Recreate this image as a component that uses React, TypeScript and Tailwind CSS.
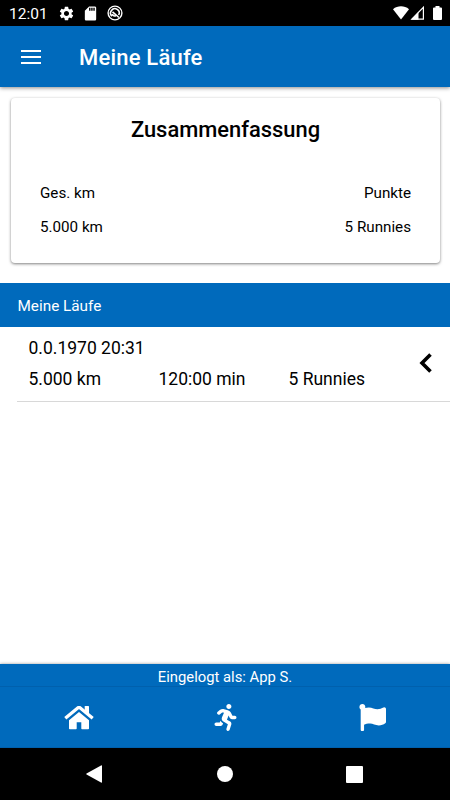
import { FaFlag, FaRunning } from 'react-icons/fa'
import { MdSdCard, MdSettings } from 'react-icons/md'

const runs = [
  { date: '0.0.1970 20:31', distance: '5.000 km', duration: '120:00 min', points: '5 Runnies' },
]

function StatusBar() {
  return (
    <div className="flex h-[26px] shrink-0 items-center bg-black pl-[9px] pr-[8px] text-white">
      <span className="w-[50px] pt-[2px] text-[15.5px] leading-[26px]">12:01</span>
      <MdSettings size={17} className="-ml-[1px]" />
      <MdSdCard size={17} className="ml-[7px]" />
      <svg className="ml-[8px]" width="16" height="16" viewBox="0 0 16 16" fill="none" stroke="currentColor">
        <circle cx="8" cy="8" r="6.9" strokeWidth="1.4" />
        <path d="M5 11.200A4.300 4.300 0 1 1 11.700 10M5.500 6.800L12 12.500M5.200 9.200c.8 1.500 2.300 2 3.600 1.600" strokeWidth="1.600" />
      </svg>
      <div className="ml-auto flex items-center">
        <svg width="16" height="14" viewBox="0 0 16 14" fill="currentColor">
          <path d="M0 3.200C4.600-.600 11.400-.600 16 3.200L8 13.500z" />
        </svg>
        <svg className="ml-[1px]" width="15" height="14" viewBox="0 0 15 14">
          <path d="M1.800 13.200H13.400V1.300z" fill="none" stroke="currentColor" strokeWidth="1.200" />
          <path d="M1 13.700L8.500 6v7.700z" fill="currentColor" />
        </svg>
        <svg className="ml-[8px]" width="9" height="14" viewBox="0 0 9 14" fill="currentColor">
          <path d="M2.500 0h4v1.400H8q1 0 1 1V13q0 1-1 1H1q-1 0-1-1V2.400q0-1 1-1h1.500z" />
        </svg>
      </div>
    </div>
  )
}

function Header() {
  return (
    <header className="relative z-10 flex h-[61px] shrink-0 items-center bg-[#006abc] pl-[21px] text-white shadow-[0_1px_4px_rgba(0,0,0,0.45)]">
      <button className="flex w-[58px] flex-col gap-[4px]" aria-label="Menü">
        <span className="h-[2px] w-[20px] bg-white" />
        <span className="h-[2px] w-[20px] bg-white" />
        <span className="h-[2px] w-[20px] bg-white" />
      </button>
      <h1 className="pt-[2px] text-[22px] font-medium tracking-[0.2px]">Meine Läufe</h1>
    </header>
  )
}

function Summary() {
  return (
    <section className="mr-[10px] ml-[11px] mt-[11px] h-[165px] shrink-0 rounded-[4px] bg-white px-[29px] pt-[15px] shadow-[0_1px_3px_rgba(0,0,0,0.5)]">
      <h2 className="text-center text-[21.9px] leading-[33px] font-medium">Zusammenfassung</h2>
      <div className="mt-[30px] flex justify-between text-[15.2px] leading-[34px]">
        <div>
          <p>Ges. km</p>
          <p>5.000 km</p>
        </div>
        <div className="text-right">
          <p>Punkte</p>
          <p>5 Runnies</p>
        </div>
      </div>
    </section>
  )
}

function RunList() {
  return (
    <section className="mt-[20px] grow">
      <h3 className="flex h-[44px] items-center bg-[#006abc] pl-[17.5px] text-[15.3px] text-white">
        <span className="pt-[3px]">Meine Läufe</span>
      </h3>
      {runs.map((run) => (
        <div key={run.date} className="ml-[17px] flex h-[75px] items-center border-b border-[#d8d8d8] pl-[11.5px] text-[17.5px]">
          <div className="w-[390.5px]">
            <p className="leading-[31px]">{run.date}</p>
            <div className="grid grid-cols-[130px_130px_1fr] leading-[31px]">
              <span>{run.distance}</span>
              <span>{run.duration}</span>
              <span>{run.points}</span>
            </div>
          </div>
          <svg className="mt-[-3px] shrink-0" width="13" height="20" viewBox="0 0 13 20" fill="none" stroke="black" strokeWidth="3.600">
            <path d="M11.500 1.500L3 10l8.500 8.500" />
          </svg>
        </div>
      ))}
    </section>
  )
}

function HomeIcon() {
  return (
    <svg className="mt-[1px]" width="30" height="24" viewBox="0 0 30 24" fill="currentColor">
      <path d="M1.300 12.200L13.700 2q1.300-1 2.600 0L28.700 12.200" fill="none" stroke="currentColor" strokeWidth="3.300" />
      <path d="M20.700.6q0-.6.600-.6H24.400q.6 0 .6.600V9l-4.300-3.600z" />
      <path d="M15 5.900L25 14.200V22.400q0 .8-.8.800H18q-.7 0-.7-.7V16.300H12.700V22.500q0 .7-.7.700H5.800q-.8 0-.8-.8V14.200z" />
    </svg>
  )
}

function Footer() {
  return (
    <footer className="shrink-0 bg-[#006abc] text-white shadow-[0_0_3px_rgba(0,0,0,0.4)]">
      <p className="h-[22px] text-center text-[14.8px] leading-[27px]">Eingelogt als: App S.</p>
      <nav className="grid h-[62px] grid-cols-[158px_134px_158px] items-center justify-items-center border-t border-b border-[#0060ad]">
        <HomeIcon />
        <FaRunning size={27} />
        <FaFlag size={27} className="ml-[2px]" />
      </nav>
    </footer>
  )
}

function SystemNav() {
  return (
    <div className="flex h-[52px] shrink-0 items-center bg-black pl-[86px] text-white">
      <svg width="16" height="18" viewBox="0 0 16 18" fill="currentColor">
        <path d="M15 .5Q16 0 16 1v16q0 1-1 .5L.500 9.500Q0 9 .500 8.500z" />
      </svg>
      <span className="ml-[115px] size-[16px] rounded-full bg-white" />
      <span className="ml-[113px] size-[17px] rounded-[1px] bg-white" />
    </div>
  )
}

export default function App() {
  return (
    <div className="flex h-[800px] w-[450px] flex-col overflow-hidden bg-white font-['Roboto',sans-serif] text-black">
      <StatusBar />
      <Header />
      <Summary />
      <RunList />
      <Footer />
      <SystemNav />
    </div>
  )
}
